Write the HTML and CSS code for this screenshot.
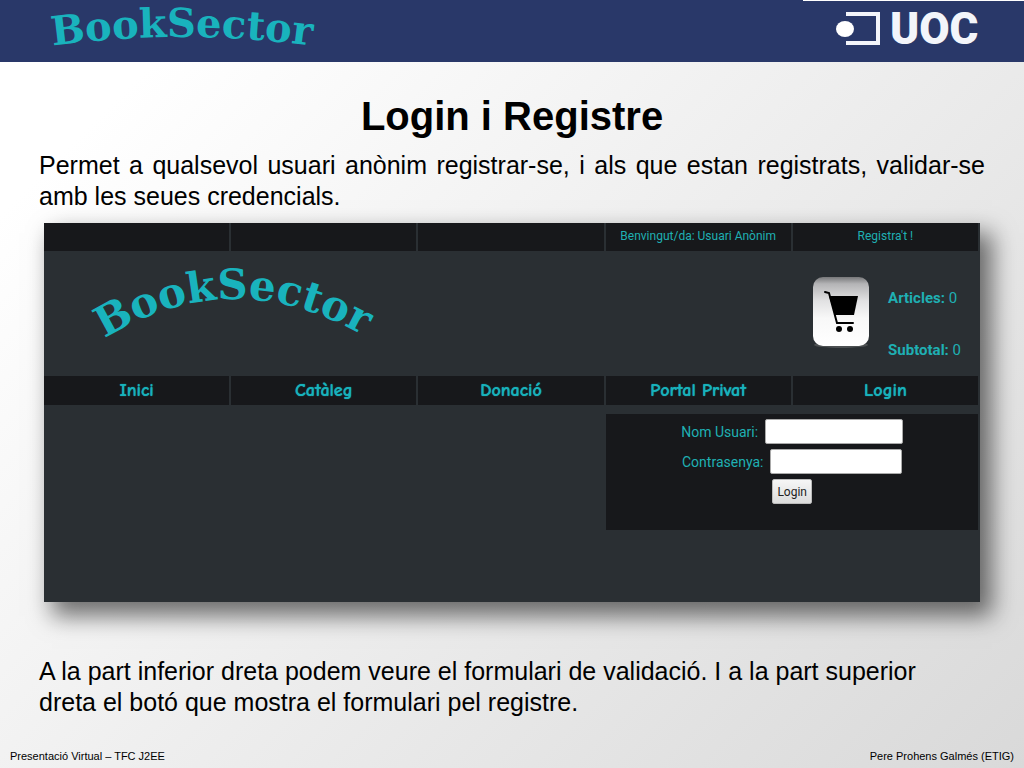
FILE: index.html
```html
<!DOCTYPE html>
<html lang="ca">
<head>
  <meta charset="UTF-8">
  <meta name="viewport" content="width=device-width, initial-scale=1.0">
  <title>BookSector - Login i Registre</title>
  <link rel="stylesheet" href="styles.css">
</head>
<body>
  <div class="slide">
    <header class="top-bar">
      <svg class="brand" viewBox="0 0 330 61" role="img" aria-label="BookSector">
        <path id="topArc" d="M 14 50 Q 172 24 330 50" fill="none"/>
        <text class="wordmark wordmark-small"><textPath href="#topArc" startOffset="50%">BookSector</textPath></text>
      </svg>
      <div class="uoc">
        <svg class="uoc-mark" viewBox="0 0 46 34" aria-hidden="true">
          <path d="M10 2H42V31H10" fill="none" stroke="#f3f5fa" stroke-width="4"/>
          <ellipse cx="9" cy="17" rx="9" ry="8" fill="#fff"/>
        </svg>
        <span class="uoc-name">UOC</span>
      </div>
    </header>

    <main class="content">
      <h1>Login i Registre</h1>
      <p class="intro">Permet a qualsevol usuari anònim registrar-se, i als que estan registrats, validar-se amb les seues credencials.</p>

      <section class="site">
        <div class="row user-row">
          <span></span>
          <span></span>
          <span></span>
          <span>Benvingut/da: Usuari Anònim</span>
          <a href="#">Registra't !</a>
        </div>

        <div class="site-head">
          <svg class="site-logo" viewBox="0 0 300 90" role="img" aria-label="BookSector">
            <path id="siteArc" d="M 8 84 Q 146 -10 292 80" fill="none"/>
            <text class="wordmark"><textPath href="#siteArc" startOffset="50%">BookSector</textPath></text>
          </svg>
          <div class="cart">
            <svg class="cart-icon" viewBox="0 0 60 74" aria-hidden="true">
              <defs>
                <linearGradient id="cartBg" x1="0" y1="0" x2="0" y2="1">
                  <stop offset="0" stop-color="#77787a"/>
                  <stop offset="0.1" stop-color="#b4b4b6"/>
                  <stop offset="0.35" stop-color="#e2e2e3"/>
                  <stop offset="0.6" stop-color="#f8f8f8"/>
                  <stop offset="1" stop-color="#fff"/>
                </linearGradient>
              </defs>
              <ellipse cx="30" cy="69" rx="27" ry="3" fill="#4c5052"/>
              <rect x="2" y="1" width="56" height="69" rx="10" fill="url(#cartBg)"/>
              <path d="M14 16l4 1 8 30h16" fill="none" stroke="#000" stroke-width="2" stroke-linecap="round"/>
              <path d="M18 20h29l-4 19H24z" fill="#000"/>
              <ellipse cx="28" cy="53" rx="3" ry="3" fill="#000"/>
              <ellipse cx="39" cy="53" rx="3" ry="3" fill="#000"/>
            </svg>
            <div class="cart-totals">
              <span><b>Articles:</b> 0</span>
              <span><b>Subtotal:</b> 0</span>
            </div>
          </div>
        </div>

        <nav class="row menu">
          <a href="#">Inici</a>
          <a href="#">Catàleg</a>
          <a href="#">Donació</a>
          <a href="#">Portal Privat</a>
          <a href="#">Login</a>
        </nav>

        <div class="site-body">
          <form class="login">
            <div class="field">
              <label for="user">Nom Usuari:</label>
              <input type="text" id="user">
            </div>
            <div class="field">
              <label for="pass">Contrasenya:</label>
              <input type="password" id="pass">
            </div>
            <button type="button">Login</button>
          </form>
        </div>
      </section>

      <p class="outro">A la part inferior dreta podem veure el formulari de validació. I a la part superior dreta el botó que mostra el formulari pel registre.</p>
    </main>

    <footer class="bottom">
      <span>Presentació Virtual – TFC J2EE</span>
      <span>Pere Prohens Galmés (ETIG)</span>
    </footer>
  </div>
</body>
</html>
```
FILE: styles.css
```css
* { box-sizing: border-box; }
body {
  margin: 0;
  color: #000;
  font-family: "Liberation Sans", Arial, sans-serif;
}
.slide {
  display: flex;
  flex-direction: column;
  min-height: 100vh;
  background: linear-gradient(135deg, #fff 0%, #fff 12%, #d9d9d9 100%);
}

/* Top bar */
.top-bar { display: flex; justify-content: space-between; height: 62px; background: #293869; }
.brand { width: 330px; height: 61px; margin-left: 10px; overflow: visible; }
.wordmark { font-family: "DejaVu Serif", serif; font-weight: bold; font-size: 42px; fill: #19b3bd; text-anchor: middle; }
.wordmark-small { font-size: 40px; }
.uoc { display: flex; align-items: center; gap: 8px; width: 221px; padding: 0 0 6px 33px; border-top: 1px solid #fff; }
.uoc-mark { width: 46px; height: 34px; }
.uoc-name { color: #f3f5fa; font: 900 44px/44px Roboto, sans-serif; }

/* Slide text */
.content { flex: 1; padding: 0 39px; }
h1 { margin: 32px 0 12px; font-size: 40px; line-height: 44px; text-align: center; }
p { margin: 0; font-size: 25px; line-height: 31px; }
.intro { text-align: justify; }
.outro { margin-top: 54px; padding-right: 48px; }

/* Web shop */
.site {
  min-height: 379px;
  margin: 11px 5px 0;
  padding-right: 2px;
  background: #2a2f33;
  color: #1fb0b3;
  font-family: Roboto, "Liberation Sans", sans-serif;
  box-shadow: 10px 12px 22px 2px rgba(0, 0, 0, 0.55);
}
.site a { color: inherit; text-decoration: none; }
.row { display: grid; grid-template-columns: repeat(5, 1fr); gap: 2px; text-align: center; }
.row > * { background: #17181b; }
.user-row { height: 28px; font-size: 12px; line-height: 27px; }
.menu { height: 29px; font: bold 18px/29px "Comic Sans MS", "Comic Neue", Lato, sans-serif; color: #18b2bb; text-shadow: 0 0 1px #18b2bb; }

.site-head { display: flex; justify-content: space-between; height: 125px; }
.site-logo { width: 300px; height: 90px; margin: 12px 0 0 40px; overflow: visible; }
.cart { display: flex; gap: 17px; padding: 25px 17px 0 0; }
.cart-icon { width: 60px; height: 74px; }
.cart-totals { display: flex; flex-direction: column; gap: 32px; padding-top: 12px; font-size: 15px; line-height: 20px; }

/* Login form */
.site-body { display: flex; justify-content: flex-end; padding-top: 9px; }
.login { width: calc(40% - 2px); height: 116px; padding-top: 5px; background: #17181b; text-align: center; font-size: 14px; }
.field { display: flex; justify-content: center; align-items: center; gap: 7px; height: 25px; margin-bottom: 5px; }
.field input { width: 138px; height: 25px; border: 1px solid #aaa; border-radius: 2px; background: #fff; }
.field input[type="password"] { width: 132px; }
.login button {
  height: 25px;
  padding: 0 4px;
  border: 1px solid #bbb;
  border-radius: 2px;
  background: linear-gradient(#f6f6f6, #dcdcdc);
  color: #222;
  font: 12px Roboto, "Liberation Sans", sans-serif;
}

/* Footer */
.bottom { display: flex; justify-content: space-between; padding: 0 10px 5px; font-size: 11px; line-height: 14px; }
```
